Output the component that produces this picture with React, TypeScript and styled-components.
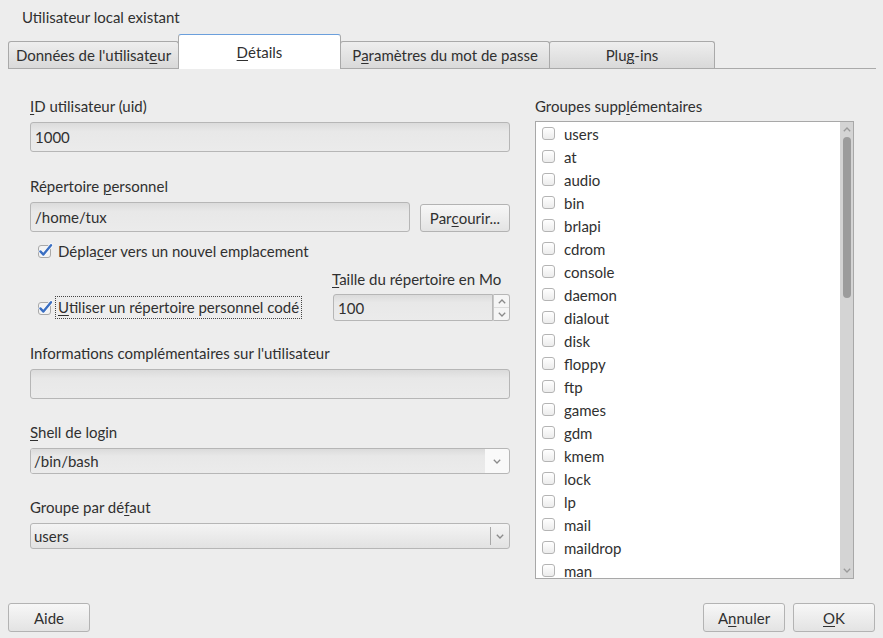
import React from 'react';
import styled, { createGlobalStyle } from 'styled-components';

const Global = createGlobalStyle`
  html, body { margin: 0; padding: 0; background: #ededed; }
  body { font-family: Lato, "Noto Sans", sans-serif; }
`;

const Window = styled.div`
  width: 883px;
  height: 638px;
  background: #ededed;
  color: #303030;
  font-family: Lato, "Noto Sans", sans-serif;
  font-size: 15px;
  display: flex;
  flex-direction: column;
  box-sizing: border-box;
  overflow: hidden;
`;

const Title = styled.div`
  height: 34px;
  line-height: 34px;
  padding-left: 22px;
  flex: none;
`;

const TabBar = styled.div`
  height: 35px;
  margin: 0 7px 0 8px;
  display: flex;
  align-items: flex-end;
  border-bottom: 1px solid #aaaaaa;
  box-sizing: border-box;
  flex: none;
`;

const Tab = styled.div<{ $w: number; $active?: boolean }>`
  width: ${(p) => p.$w}px;
  box-sizing: border-box;
  display: flex;
  align-items: center;
  justify-content: center;
  border: 1px solid #a9a9a9;
  border-bottom: none;
  border-radius: 3px 3px 0 0;
  height: ${(p) => (p.$active ? 35 : 27)}px;
  margin-bottom: ${(p) => (p.$active ? -1 : 0)}px;
  background: ${(p) => (p.$active ? '#ffffff' : 'linear-gradient(to bottom, #eeeeee, #d9d9d9)')};
  border-top-color: ${(p) => (p.$active ? '#6b9fdc' : '#a9a9a9')};
  white-space: nowrap;
  & + & { margin-left: -1px; }
`;

const Mn = styled.span`
  text-decoration: underline;
  text-underline-offset: 2px;
  text-decoration-thickness: 1px;
`;

const Content = styled.div`
  flex: 1;
  min-height: 0;
  display: flex;
  gap: 25px;
  padding: 28px 0 0 30px;
`;

const LeftCol = styled.div`
  width: 480px;
  display: flex;
  flex-direction: column;
`;

const RightCol = styled.div`
  width: 319px;
  display: flex;
  flex-direction: column;
`;

const Group = styled.div<{ $mt?: number }>`
  margin-top: ${(p) => p.$mt ?? 0}px;
  display: flex;
  flex-direction: column;
`;

const Label = styled.div<{ $mb?: number }>`
  height: 18px;
  line-height: 18px;
  margin-bottom: ${(p) => p.$mb ?? 7}px;
  white-space: nowrap;
`;

const Entry = styled.div<{ $h?: number; $grow?: boolean }>`
  height: ${(p) => p.$h ?? 30}px;
  box-sizing: border-box;
  border: 1px solid #b6b6b6;
  border-radius: 3px;
  background: linear-gradient(to bottom, #dbdbdb, #e8e8e8 30%, #ebebeb);
  display: flex;
  align-items: center;
  padding-left: 4px;
  flex: ${(p) => (p.$grow ? '1 1 auto' : 'none')};
`;

const FieldRow = styled.div`
  display: flex;
  align-items: flex-end;
  gap: 10px;
`;

const Button = styled.div<{ $w: number; $h?: number }>`
  width: ${(p) => p.$w}px;
  height: ${(p) => p.$h ?? 29}px;
  box-sizing: border-box;
  border: 1px solid #b3b3b3;
  border-radius: 3px;
  background: linear-gradient(to bottom, #f7f7f7, #e3e3e3);
  display: flex;
  align-items: center;
  justify-content: center;
  flex: none;
`;

const CheckRow = styled.div<{ $mt?: number; $h?: number }>`
  margin-top: ${(p) => p.$mt ?? 0}px;
  height: ${(p) => p.$h ?? 18}px;
  padding-left: 8px;
  display: flex;
  align-items: center;
  gap: 6px;
  white-space: nowrap;
`;

const FocusLabel = styled.span`
  border: 1px dotted #444444;
  padding: 1px 2px 2px 2px;
  margin-left: -3px;
`;

const SplitRow = styled.div`
  margin-top: 10px;
  display: flex;
  align-items: flex-end;
  justify-content: space-between;
`;

const SpinCol = styled.div`
  width: 177px;
  display: flex;
  flex-direction: column;
`;

const SpinLabel = styled(Label)`
  margin-left: -1px;
`;

const Spin = styled.div`
  height: 27px;
  display: flex;
`;

const SpinEntry = styled(Entry)`
  border-radius: 3px 0 0 3px;
`;

const SpinButtons = styled.div`
  width: 17px;
  box-sizing: border-box;
  border: 1px solid #b6b6b6;
  border-left: 1px solid #c8c8c8;
  border-radius: 0 3px 3px 0;
  background: #f5f5f5;
  display: flex;
  flex-direction: column;
`;

const SpinHalf = styled.div<{ $top?: boolean }>`
  flex: 1;
  display: flex;
  align-items: center;
  justify-content: center;
  border-bottom: ${(p) => (p.$top ? '1px solid #dcdcdc' : 'none')};
`;

const Combo = styled.div<{ $editable?: boolean }>`
  height: 26px;
  box-sizing: border-box;
  border: 1px solid #b6b6b6;
  border-radius: 3px;
  display: flex;
  overflow: hidden;
  background: ${(p) =>
    p.$editable ? '#f9f9f9' : 'linear-gradient(to bottom, #f4f4f4, #e2e2e2)'};
`;

const ComboText = styled.div<{ $editable?: boolean }>`
  flex: 1;
  display: flex;
  align-items: center;
  padding-left: 3px;
  background: ${(p) =>
    p.$editable ? 'linear-gradient(to bottom, #dbdbdb, #e8e8e8 30%, #ebebeb)' : 'transparent'};
`;

const ComboArrow = styled.div<{ $w: number; $sep?: boolean }>`
  width: ${(p) => p.$w}px;
  display: flex;
  align-items: center;
  justify-content: center;
  border-left: ${(p) => (p.$sep ? '1px solid #a8a8a8' : 'none')};
  margin: ${(p) => (p.$sep ? '3px 0' : '0')};
`;

const List = styled.div`
  height: 458px;
  box-sizing: border-box;
  border: 1px solid #a8a8a8;
  background: #ffffff;
  display: flex;
`;

const Items = styled.div`
  flex: 1;
  overflow: hidden;
  display: flex;
  flex-direction: column;
`;

const Item = styled.div`
  height: 23px;
  flex: none;
  display: flex;
  align-items: center;
  padding-left: 6px;
  gap: 9px;
`;

const Box = styled.span`
  width: 13px;
  height: 13px;
  box-sizing: border-box;
  border: 1px solid #b4b4b4;
  border-radius: 3px;
  background: linear-gradient(to bottom, #ffffff, #ececec);
  flex: none;
`;

const Scrollbar = styled.div`
  width: 13px;
  background: #d4d4d4;
  display: flex;
  flex-direction: column;
  align-items: center;
`;

const ScrollArrow = styled.div`
  height: 15px;
  display: flex;
  align-items: center;
  justify-content: center;
  flex: none;
`;

const Thumb = styled.div`
  width: 8px;
  height: 161px;
  border-radius: 4px;
  background: #9c9c9c;
  flex: none;
`;

const Spacer = styled.div`
  flex: 1;
`;

const Footer = styled.div`
  flex: none;
  display: flex;
  align-items: flex-end;
  padding: 0 8px 6px 8px;
`;

const FooterRight = styled.div`
  margin-left: auto;
  display: flex;
  gap: 8px;
`;

const Chevron = ({ up, color = '#8a8a8a' }: { up?: boolean; color?: string }) => (
  <svg width="8" height="5" viewBox="0 0 8 5">
    <path
      d={up ? 'M0.8 4.2 L4 1 L7.2 4.2' : 'M0.8 0.8 L4 4 L7.2 0.8'}
      fill="none"
      stroke={color}
      strokeWidth="1.3"
    />
  </svg>
);

const Checked = () => (
  <svg width="14" height="14" viewBox="0 0 14 14" style={{ overflow: 'visible', flex: 'none' }}>
    <rect x="0.5" y="1.5" width="12" height="12" rx="2.5" fill="#f3f3f3" stroke="#a9a9a9" />
    <path d="M2.4 7.4 L5.4 10.6 L13 1.2" fill="none" stroke="#ffffff" strokeWidth="3.8" strokeLinecap="round" strokeLinejoin="round" />
    <path d="M2.4 7.4 L5.4 10.6 L13 1.2" fill="none" stroke="#3b6fc2" strokeWidth="2.4" strokeLinecap="round" strokeLinejoin="round" />
  </svg>
);

const groups = [
  'users', 'at', 'audio', 'bin', 'brlapi', 'cdrom', 'console', 'daemon', 'dialout', 'disk',
  'floppy', 'ftp', 'games', 'gdm', 'kmem', 'lock', 'lp', 'mail', 'maildrop', 'man',
];

export default function App() {
  return (
    <Window>
      <Global />
      <Title>Utilisateur local existant</Title>
      <TabBar>
        <Tab $w={171}>
          Données de l'utilisat<Mn>e</Mn>ur
        </Tab>
        <Tab $w={163} $active>
          <Mn>D</Mn>étails
        </Tab>
        <Tab $w={210}>
          P<Mn>a</Mn>ramètres du mot de passe
        </Tab>
        <Tab $w={166}>
          Plu<Mn>g</Mn>-ins
        </Tab>
      </TabBar>
      <Content>
        <LeftCol>
          <Group>
            <Label>
              <Mn>I</Mn>D utilisateur (uid)
            </Label>
            <Entry>1000</Entry>
          </Group>
          <Group $mt={25}>
            <Label>
              Répertoire <Mn>p</Mn>ersonnel
            </Label>
            <FieldRow>
              <Entry $grow>/home/tux</Entry>
              <Button $w={90} $h={28}>
                Par<Mn>c</Mn>ourir...
              </Button>
            </FieldRow>
          </Group>
          <CheckRow $mt={10}>
            <Checked />
            <span>
              Dépla<Mn>c</Mn>er vers un nouvel emplacement
            </span>
          </CheckRow>
          <SplitRow>
            <CheckRow $h={27}>
              <Checked />
              <FocusLabel>
                <Mn>U</Mn>tiliser un répertoire personnel codé
              </FocusLabel>
            </CheckRow>
            <SpinCol>
              <SpinLabel $mb={6}>
                <Mn>T</Mn>aille du répertoire en Mo
              </SpinLabel>
              <Spin>
                <SpinEntry $h={27} $grow>100</SpinEntry>
                <SpinButtons>
                  <SpinHalf $top>
                    <Chevron up />
                  </SpinHalf>
                  <SpinHalf>
                    <Chevron />
                  </SpinHalf>
                </SpinButtons>
              </Spin>
            </SpinCol>
          </SplitRow>
          <Group $mt={23}>
            <Label>Informations complémentaires sur l'utilisateur</Label>
            <Entry />
          </Group>
          <Group $mt={24}>
            <Label>
              <Mn>S</Mn>hell de login
            </Label>
            <Combo $editable>
              <ComboText $editable>/bin/bash</ComboText>
              <ComboArrow $w={24}>
                <Chevron />
              </ComboArrow>
            </Combo>
          </Group>
          <Group $mt={24}>
            <Label>
              Groupe par dé<Mn>f</Mn>aut
            </Label>
            <Combo>
              <ComboText>users</ComboText>
              <ComboArrow $w={18} $sep>
                <Chevron />
              </ComboArrow>
            </Combo>
          </Group>
        </LeftCol>
        <RightCol>
          <Label $mb={6}>
            Groupes supp<Mn>l</Mn>émentaires
          </Label>
          <List>
            <Items>
              {groups.map((g) => (
                <Item key={g}>
                  <Box />
                  <span>{g}</span>
                </Item>
              ))}
            </Items>
            <Scrollbar>
              <ScrollArrow>
                <Chevron up color="#9a9a9a" />
              </ScrollArrow>
              <Thumb />
              <Spacer />
              <ScrollArrow>
                <Chevron color="#9a9a9a" />
              </ScrollArrow>
            </Scrollbar>
          </List>
        </RightCol>
      </Content>
      <Footer>
        <Button $w={82}>Aide</Button>
        <FooterRight>
          <Button $w={82}>
            A<Mn>n</Mn>nuler
          </Button>
          <Button $w={82}>
            <Mn>O</Mn>K
          </Button>
        </FooterRight>
      </Footer>
    </Window>
  );
}
